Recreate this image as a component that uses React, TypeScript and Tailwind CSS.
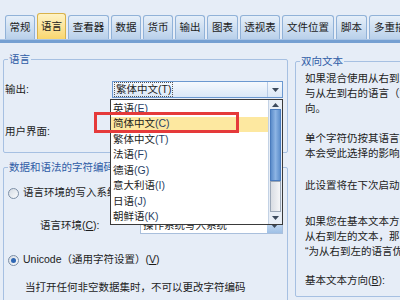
import React from 'react';

type Tab = { label: string; w: string; active?: boolean };

const tabs: Tab[] = [
  { label: '常规', w: 'w-[30px]' },
  { label: '语言', w: 'w-[29px]', active: true },
  { label: '查看器', w: 'w-[41px]' },
  { label: '数据', w: 'w-[30px]' },
  { label: '货币', w: 'w-[30px]' },
  { label: '输出', w: 'w-[30px]' },
  { label: '图表', w: 'w-[31px]' },
  { label: '透视表', w: 'w-[40px]' },
  { label: '文件位置', w: 'w-[52px]' },
  { label: '脚本', w: 'w-[31px]' },
  { label: '多重插补', w: 'w-[52px]' },
];

const languages = [
  { name: '英语', key: 'E' },
  { name: '简体中文', key: 'C' },
  { name: '繁体中文', key: 'T' },
  { name: '法语', key: 'F' },
  { name: '德语', key: 'G' },
  { name: '意大利语', key: 'I' },
  { name: '日语', key: 'J' },
  { name: '朝鲜语', key: 'K' },
];

const GroupBox: React.FC<{ title: string; className?: string; children?: React.ReactNode }> = ({
  title,
  className = '',
  children,
}) => (
  <div className={`relative border border-[#a6c0e2] rounded-[2px] ${className}`}>
    <span className="absolute -top-[8px] left-[4px] px-[1px] bg-[#e6edf7] leading-[14px] text-[#2f5ca6] whitespace-nowrap">
      {title}
    </span>
    {children}
  </div>
);

const Radio: React.FC<{ checked?: boolean }> = ({ checked }) => (
  <span className="flex items-center justify-center w-[11px] h-[11px] rounded-full border border-[#7d8fa6] bg-gradient-to-br from-[#d4dbe4] to-[#fbfcfd]">
    {checked && <span className="w-[5px] h-[5px] rounded-full bg-[#2f67b4]" />}
  </span>
);

const Arrow: React.FC = () => (
  <svg width="7" height="4" viewBox="0 0 7 4">
    <path d="M0 0h7L3.5 4z" fill="#3c4a5c" />
  </svg>
);

export default function App() {
  return (
    <div className="relative w-[400px] h-[300px] overflow-hidden bg-[#e6edf7] text-[10.5px] text-[#1c1c1c] font-[Liberation_Sans,Noto_Sans_CJK_SC,sans-serif]">
      {/* tab strip */}
      <div className="flex items-end gap-[2px] pl-[5px] pt-[13px]">
        {tabs.map((t) => (
          <div
            key={t.label}
            className={`${t.w} shrink-0 flex items-center justify-center whitespace-nowrap overflow-hidden rounded-t-[3px] border border-b-0 ${
              t.active
                ? 'h-[26px] border-[#d9b24a] bg-gradient-to-b from-[#fff3c4] to-[#f9d66e]'
                : 'h-[24px] border-[#91b2d8] bg-gradient-to-b from-[#e6eff9] to-[#b9d0ea]'
            }`}
          >
            {t.label}
          </div>
        ))}
      </div>
      <div className="h-[4px] bg-[#76a0d2] border-t border-[#a9c4e5]" />

      <div className="flex pl-[3px]">
        {/* left column */}
        <div className="w-[285px] shrink-0 flex flex-col">
          <GroupBox title="语言" className="mt-[16px] h-[94px]">
            <div className="flex items-center h-[17px] mt-[21px] pl-[1px]">
              <span>输出:</span>
              <div className="ml-auto mr-[4px] w-[171px] h-[17px] flex items-center border border-[#6b98d0] bg-gradient-to-b from-[#f5f9fe] to-[#dbe8f7]">
                <span className="ml-[1px] px-[1px] leading-[13px] border border-dotted border-[#555]">繁体中文(T)</span>
                <span className="ml-auto w-[15px] h-full flex items-center justify-center border-l border-[#b7cbe6]">
                  <Arrow />
                </span>
              </div>
            </div>
            <div className="flex items-center h-[17px] mt-[25px] pl-[1px]">
              <span>用户界面:</span>
              {/* combo hidden beneath the open list */}
              <div className="ml-auto mr-[4px] w-[171px] h-[17px] border border-[#a9bfdc] bg-white" />
            </div>
          </GroupBox>

          <GroupBox title="数据和语法的字符编码" className="mt-[14px] h-[200px]">
            <div className="flex items-center gap-[4px] h-[14px] mt-[18px] pl-[4px]">
              <Radio />
              <span>语言环境的写入系统</span>
            </div>
            <div className="flex items-center h-[16px] mt-[18px] pl-[36px]">
              <span>
                语言环境(<span className="underline">C</span>):
              </span>
              <div className="ml-auto mr-[4px] w-[143px] h-[16px] flex items-center border border-[#a9bfdc] bg-white">
                <span className="pl-[2px]">操作系统写入系统</span>
                <span className="ml-auto w-[15px] h-full flex items-center justify-center bg-gradient-to-b from-[#d3e3f5] to-[#9fc0e6]">
                  <Arrow />
                </span>
              </div>
            </div>
            <div className="flex items-center gap-[4px] h-[14px] mt-[19px] pl-[4px]">
              <Radio checked />
              <span>
                Unicode（通用字符设置）(<span className="underline">V</span>)
              </span>
            </div>
            <div className="flex items-center h-[14px] mt-[14px] pl-[21px] whitespace-nowrap">
              当打开任何非空数据集时，不可以更改字符编码
            </div>
          </GroupBox>
        </div>

        {/* right column */}
        <div className="ml-[7px] shrink-0">
          <GroupBox title="双向文本" className="mt-[18px] w-[130px] h-[236px]">
            <div className="flex flex-col pl-[9px] pt-[9px] leading-[15px] whitespace-nowrap">
              <div>
                <div>如果混合使用从右到左的语言（如阿拉伯语）</div>
                <div>与从左到右的语言（如英语），请选择基本文本方</div>
                <div>向。</div>
              </div>
              <div className="mt-[15px]">
                <div>单个字符仍按其语言的方向显示，但文</div>
                <div>本会受此选择的影响。</div>
              </div>
              <div className="mt-[17px]">此设置将在下次启动时生效。</div>
              <div className="mt-[21px]">
                <div>如果您在基本文本方向中选择</div>
                <div>从右到左的文本，那么将选择</div>
                <div>“为从右到左的语言优化”</div>
              </div>
              <div className="mt-[14px]">
                基本文本方向(<span className="underline">B</span>):
              </div>
            </div>
          </GroupBox>
        </div>
      </div>

      {/* open dropdown list */}
      <div className="absolute left-[110px] top-[99px] w-[173px] h-[126px] flex border border-[#3a3a3a] bg-white">
        <div className="flex-1 flex flex-col pt-[1px]">
          {languages.map((l) => (
            <div
              key={l.key}
              className={`h-[15.5px] flex items-center pl-[2px] whitespace-nowrap ${
                l.key === 'C' ? 'bg-[#fde8a0]' : ''
              }`}
            >
              {l.name}
              <span className="text-[#2a3f66]">({l.key})</span>
            </div>
          ))}
        </div>
        <div className="w-[14px] flex flex-col bg-[#e8eef6] border-l border-[#c3d2e5]">
          <div className="h-[9px] flex items-center justify-center">
            <svg width="7" height="4" viewBox="0 0 7 4">
              <path d="M0 4h7L3.5 0z" fill="#3c4a5c" />
            </svg>
          </div>
          <div className="h-[72px] mx-[1px] border border-[#4a7bbd] bg-gradient-to-r from-[#5b8cca] via-[#8db4e4] to-[#5f90cd]" />
          <div className="h-[31px] mx-[1px] border border-[#9aa6b6] bg-gradient-to-r from-[#d9dde3] to-[#f4f5f7]" />
          <div className="flex-1 flex items-center justify-center">
            <Arrow />
          </div>
        </div>
      </div>

      {/* red highlight frame */}
      <div className="absolute left-[94px] top-[112px] w-[145px] h-[21px] border-[3px] border-[#e53a3a]" />
    </div>
  );
}
